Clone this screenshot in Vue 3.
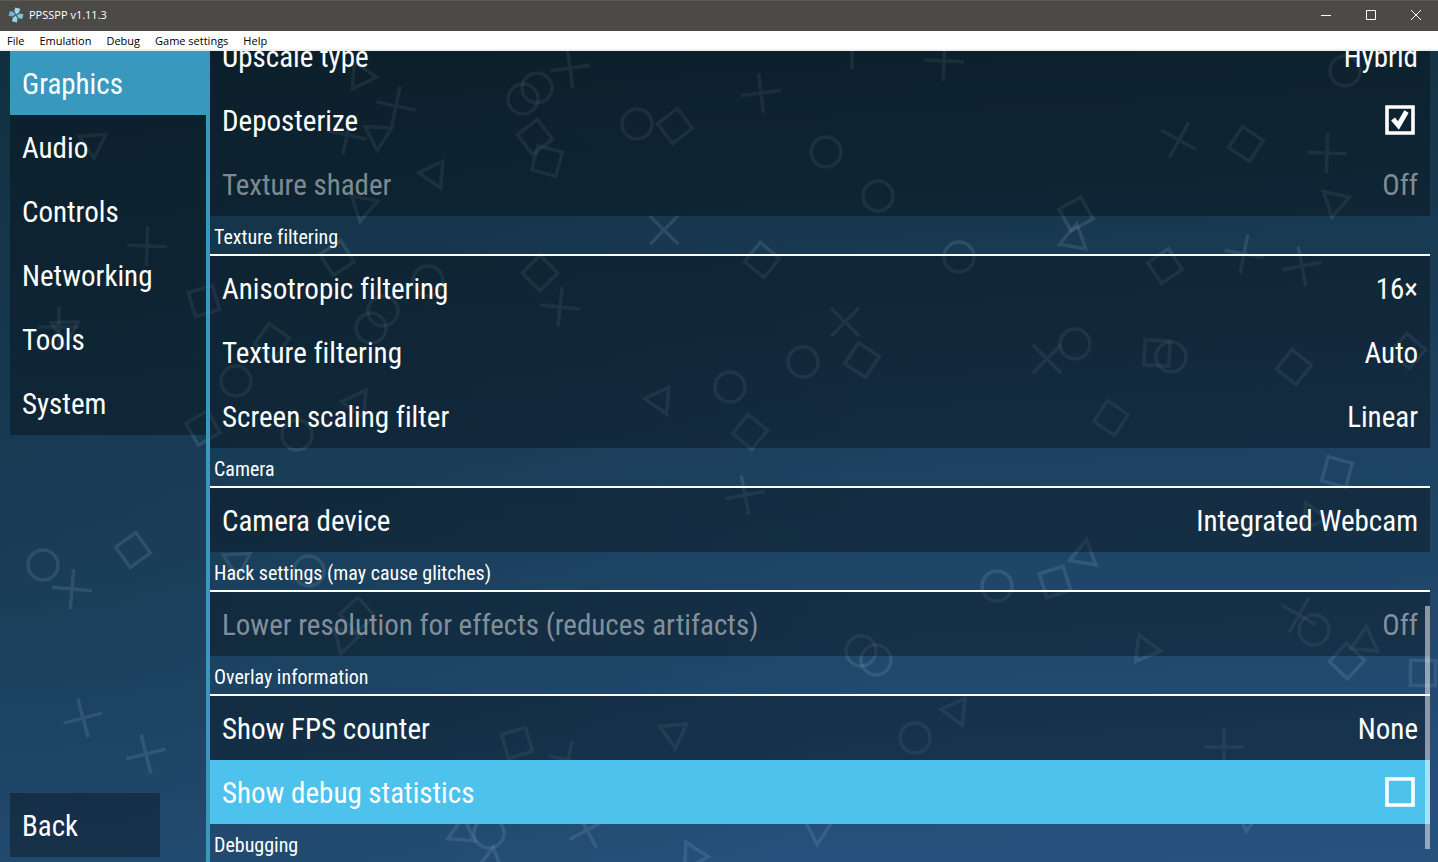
<script setup>
import { reactive } from 'vue'

const menus = ['File', 'Emulation', 'Debug', 'Game settings', 'Help']
const tabs = ['Graphics', 'Audio', 'Controls', 'Networking', 'Tools', 'System']

const sections = reactive([
  {
    title: '',
    rows: [
      { label: 'Upscale type', value: 'Hybrid' },
      { label: 'Deposterize', check: true, on: true },
      { label: 'Texture shader', value: 'Off', disabled: true },
    ],
  },
  {
    title: 'Texture filtering',
    rows: [
      { label: 'Anisotropic filtering', value: '16×' },
      { label: 'Texture filtering', value: 'Auto' },
      { label: 'Screen scaling filter', value: 'Linear' },
    ],
  },
  { title: 'Camera', rows: [{ label: 'Camera device', value: 'Integrated Webcam' }] },
  {
    title: 'Hack settings (may cause glitches)',
    rows: [{ label: 'Lower resolution for effects (reduces artifacts)', value: 'Off', disabled: true }],
  },
  {
    title: 'Overlay information',
    rows: [
      { label: 'Show FPS counter', value: 'None' },
      { label: 'Show debug statistics', check: true, on: false, focused: true },
    ],
  },
  { title: 'Debugging', rows: [] },
])

// Floating background symbols: [x, y, rotation]
const circles = [
  [523, 99], [537, 88], [637, 124], [826, 152], [878, 196], [1345, 71], [428, 281], [383, 311],
  [371, 328], [236, 381], [297, 435], [730, 387], [803, 362], [959, 257], [1075, 344], [1171, 357],
  [43, 565], [309, 571], [861, 651], [876, 660], [997, 586], [1314, 630], [915, 738], [489, 833],
]
const squares = [
  [535, 137, 52], [547, 161, 15], [675, 126, 53], [1246, 144, 34], [1076, 214, -29], [337, 258, 57],
  [204, 301, -17], [272, 341, 35], [203, 428, -30], [540, 273, 45], [762, 260, 39], [862, 360, 34],
  [750, 432, 39], [1165, 266, 56], [1157, 353, 3], [1294, 367, 39], [1111, 418, 34], [1408, 351, 41],
  [133, 550, 54], [357, 615, 48], [1337, 472, 15], [1055, 582, -18], [1347, 661, 43], [1423, 673, 1],
  [517, 743, -16],
]
const crosses = [
  [570, 68, -8], [761, 93, -7], [852, 49, 0], [944, 61, 2], [396, 106, 12], [347, 135, 12],
  [1179, 140, 29], [1327, 153, 2], [147, 246, 2], [59, 327, 0], [664, 230, 44], [560, 307, 6],
  [845, 322, 44], [1244, 254, 11], [1302, 266, -11], [1047, 359, 45], [72, 589, 5], [745, 495, -11],
  [1299, 615, 30], [83, 718, -15], [146, 754, -14], [568, 760, 12], [587, 830, -28], [1224, 747, 0],
]
const triangles = [
  [361, 76, 94], [93, 143, 176], [378, 135, 183], [434, 174, 275], [363, 206, 191], [1335, 202, 192],
  [65, 330, 178], [357, 403, 275], [660, 400, 275], [1074, 239, 10], [237, 562, 177], [345, 639, 196],
  [1084, 555, 10], [1312, 517, -23], [1145, 649, 97], [1365, 642, 5], [674, 733, 175], [956, 711, 276],
  [693, 856, 93], [818, 829, 183], [491, 863, 8], [462, 832, 5], [1248, 816, 187],
]
const place = ([x, y, r = 0]) => `translate(${x} ${y - 51}) rotate(${r})`
</script>

<template>
  <div class="window">
    <header class="titlebar">
      <svg class="logo" viewBox="0 0 16 16" width="16" height="16" aria-hidden="true">
        <g transform="rotate(14 8 8)">
          <path d="M5.5 1h5v3.6L8 7.400 5.500 4.600z" fill="#9bdcec" />
          <path d="M15 5.500v5h-3.600L8.600 8l2.800-2.500z" fill="#7cc4dc" />
          <path d="M10.500 15h-5v-3.600L8 8.600l2.500 2.800z" fill="#8ed3e6" />
          <path d="M1 10.500v-5h3.600L7.400 8l-2.800 2.500z" fill="#6ab6d4" />
        </g>
      </svg>
      <span class="caption">PPSSPP v1.11.3</span>
      <div class="controls">
        <button type="button" aria-label="Minimize">
          <svg width="10" height="10" viewBox="0 0 10 10"><path d="M0 5.500h10" /></svg>
        </button>
        <button type="button" aria-label="Maximize">
          <svg width="10" height="10" viewBox="0 0 10 10"><path d="M.5.5h9v9h-9z" /></svg>
        </button>
        <button type="button" aria-label="Close">
          <svg width="10" height="10" viewBox="0 0 10 10"><path d="M0 0l10 10M10 0L0 10" /></svg>
        </button>
      </div>
    </header>

    <nav class="menubar">
      <button v-for="m in menus" :key="m" type="button">{{ m }}</button>
    </nav>

    <main class="screen">
      <svg class="symbols" aria-hidden="true">
        <circle v-for="(s, i) in circles" :key="'c' + i" r="15" :transform="place(s)" />
        <path v-for="(s, i) in squares" :key="'s' + i" d="M-12.500-12.500h25v25h-25z" :transform="place(s)" />
        <path v-for="(s, i) in crosses" :key="'x' + i" d="M0-20V20M-20 0H20" :transform="place(s)" />
        <path v-for="(s, i) in triangles" :key="'t' + i" d="M0-15.500L13.400 7.750H-13.400z" :transform="place(s)" />
      </svg>

      <aside class="sidebar">
        <nav class="tabs">
          <button v-for="(t, i) in tabs" :key="t" type="button" :class="{ active: i === 0 }">{{ t }}</button>
        </nav>
        <button type="button" class="back">Back</button>
      </aside>

      <section class="pane">
        <div class="list">
          <template v-for="s in sections" :key="s.title">
            <h2 v-if="s.title">{{ s.title }}</h2>
            <template v-for="r in s.rows" :key="r.label">
              <label v-if="r.check" class="row" :class="{ focused: r.focused }">
                <span>{{ r.label }}</span>
                <input v-model="r.on" type="checkbox" />
                <svg class="box" width="30" height="30" viewBox="0 0 30 30" aria-hidden="true">
                  <path class="frame" d="M2 2h26v26H2z" />
                  <path v-if="r.on" class="tick" d="M8 14l5.500 6.500 8-14" />
                </svg>
              </label>
              <button v-else type="button" class="row" :disabled="r.disabled">
                <span>{{ r.label }}</span>
                <span class="value">{{ r.value }}</span>
              </button>
            </template>
          </template>
        </div>
        <div class="thumb"></div>
      </section>
    </main>
  </div>
</template>

<style>
body {
  margin: 0;
}
</style>

<style scoped>
.window {
  display: flex;
  flex-direction: column;
  height: 100vh;
  overflow: hidden;
}
button {
  margin: 0;
  padding: 0;
  border: 0;
  background: none;
  font: inherit;
  color: inherit;
  text-align: left;
}
.titlebar {
  display: flex;
  align-items: center;
  flex: none;
  box-sizing: border-box;
  height: 31px;
  padding: 0 0 1px 8px;
  background: #4b4a47;
  box-shadow: inset 0 1px #5b5b58;
  color: #fff;
  font: 11px/16px "Open Sans", "Noto Sans", sans-serif;
}
.caption {
  margin-left: 5px;
}
.controls {
  display: flex;
  margin-left: auto;
}
.controls button {
  display: flex;
  align-items: center;
  justify-content: center;
  width: 45px;
  height: 30px;
}
.controls path {
  fill: none;
  stroke: #fff;
}
.menubar {
  display: flex;
  flex: none;
  gap: 15px;
  box-sizing: border-box;
  height: 20px;
  padding: 1px 0 0 7px;
  border-bottom: 2px solid #f0f0f0;
  background: #fff;
  color: #000;
  font: 11px/16px "Open Sans", "Noto Sans", sans-serif;
}
.screen {
  position: relative;
  display: flex;
  flex: 1;
  min-height: 0;
  overflow: hidden;
  background:
    radial-gradient(ellipse 900px 700px at 0 60%, rgba(8, 40, 50, 0.25), transparent),
    linear-gradient(177deg, #12303f 0%, #17384f 24%, #1d4261 52%, #21496d 76%, #27527e 100%);
  color: #fff;
  font: 29px/62px "Roboto Condensed", "Liberation Sans Narrow", Roboto, sans-serif;
}
.sidebar,
.pane,
.screen button {
  font-variant-ligatures: none;
}
.symbols {
  position: absolute;
  inset: 0;
  width: 100%;
  height: 100%;
  fill: none;
  stroke: rgba(200, 225, 235, 0.12);
  stroke-width: 3.500;
}
.sidebar {
  position: relative;
  display: flex;
  flex: none;
  flex-direction: column;
  justify-content: space-between;
  box-sizing: border-box;
  width: 210px;
  padding: 0 0 5px 10px;
  border-right: 4px solid #3998bd;
}
.tabs {
  display: flex;
  flex-direction: column;
}
.tabs button,
.back {
  box-sizing: border-box;
  height: 64px;
  padding: 2px 0 0 12px;
  background: rgba(0, 0, 0, 0.33);
}
.tabs .active {
  background: #3998bd;
}
.back {
  width: 150px;
}
.pane {
  position: relative;
  flex: 1;
  min-width: 0;
  margin-right: 8px;
}
.list {
  display: flex;
  flex-direction: column;
  margin-top: -27px;
}
h2 {
  box-sizing: border-box;
  height: 40px;
  margin: 0;
  padding: 2px 0 0 4px;
  border-bottom: 2px solid #fff;
  font-size: 20px;
  font-weight: 400;
  line-height: 38px;
}
.row {
  position: relative;
  display: flex;
  align-items: center;
  justify-content: space-between;
  box-sizing: border-box;
  height: 64px;
  padding: 2px 12px 0;
  background: rgba(0, 0, 0, 0.33);
}
.row:disabled {
  color: rgba(255, 255, 255, 0.48);
}
.focused {
  background: #4dc2ed;
}
.row input {
  position: absolute;
  right: 12px;
  width: 32px;
  height: 32px;
  margin: 0;
  opacity: 0;
}
.box {
  margin: 0 3px 2px 0;
}
.frame {
  fill: none;
  stroke: #fff;
  stroke-width: 3.600;
}
.tick {
  fill: none;
  stroke: #fff;
  stroke-width: 5;
}
.thumb {
  position: absolute;
  top: 68.400%;
  right: 0;
  width: 5px;
  height: 30%;
  background: rgba(255, 255, 255, 0.5);
}
</style>
